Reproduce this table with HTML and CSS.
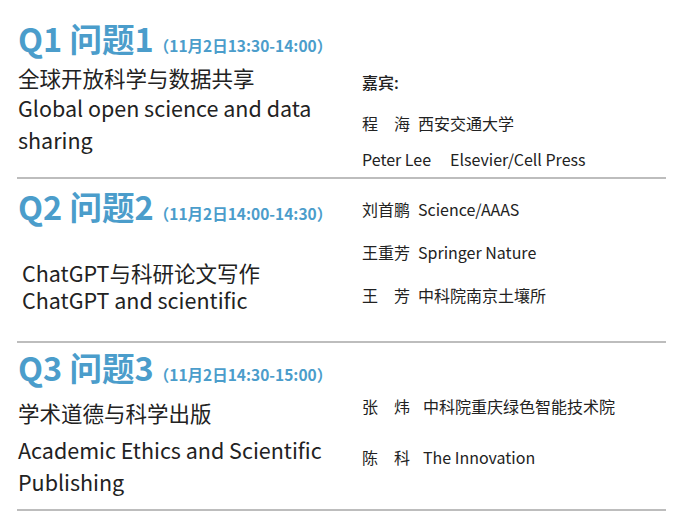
FILE: index.html
```html
<!DOCTYPE html>
<html lang="zh-CN">
<head>
<meta charset="utf-8">
<title>Agenda</title>
<link rel="stylesheet" href="styles.css">
</head>
<body>
<main class="agenda">
  <section class="topic topic-1">
    <div class="topic-left">
      <h2 class="q"><span class="q-main">Q1 问题1</span><span class="q-time">（11月2日13:30-14:00）</span></h2>
      <p class="zh zh-1">全球开放科学与数据共享</p>
      <p class="en en-1">Global open science and data sharing</p>
    </div>
    <ul class="guests guests-1">
      <li class="guest label">嘉宾:</li>
      <li class="guest"><span class="name">程　海</span><span class="org">西安交通大学</span></li>
      <li class="guest"><span class="name name-wide">Peter Lee</span><span class="org">Elsevier/Cell Press</span></li>
    </ul>
  </section>
  <section class="topic topic-2">
    <div class="topic-left">
      <h2 class="q"><span class="q-main">Q2 问题2</span><span class="q-time">（11月2日14:00-14:30）</span></h2>
      <p class="mix mix-2">ChatGPT与科研论文写作<br>ChatGPT and scientific</p>
    </div>
    <ul class="guests guests-2">
      <li class="guest"><span class="name">刘首鹏</span><span class="org">Science/AAAS</span></li>
      <li class="guest"><span class="name">王重芳</span><span class="org">Springer Nature</span></li>
      <li class="guest"><span class="name">王　芳</span><span class="org">中科院南京土壤所</span></li>
    </ul>
  </section>
  <section class="topic topic-3">
    <div class="topic-left">
      <h2 class="q"><span class="q-main">Q3 问题3</span><span class="q-time">（11月2日14:30-15:00）</span></h2>
      <p class="zh zh-3">学术道德与科学出版</p>
      <p class="en en-3">Academic Ethics and Scientific Publishing</p>
    </div>
    <ul class="guests guests-3">
      <li class="guest"><span class="name name-3">张　炜</span><span class="org">中科院重庆绿色智能技术院</span></li>
      <li class="guest"><span class="name name-3">陈　科</span><span class="org">The Innovation</span></li>
    </ul>
  </section>
</main>
</body>
</html>
```
FILE: styles.css
```css
* { box-sizing: border-box; }
html, body {
  margin: 0;
  padding: 0;
  background: #ffffff;
}
body {
  font-family: "Noto Sans CJK SC", "Noto Sans", sans-serif;
  color: #222222;
}
.agenda {
  width: 649px;
  margin-left: 17px;
}
.topic {
  display: grid;
  grid-template-columns: 345px 1fr;
  border-bottom: 2px solid #bdbdbd;
}
.topic-1 { height: 179px; padding-top: 18px; }
.topic-2 { height: 164px; padding-top: 7px; }
.topic-3 { height: 168px; padding-top: 4px; }

.topic-left { padding-left: 1px; }

.q {
  margin: 0;
  font-size: 32.5px;
  line-height: 40px;
  font-weight: 700;
  color: #4b9dcb;
  white-space: nowrap;
}
.q-time {
  font-size: 15.5px;
  font-weight: 700;
}

.zh, .en, .mix {
  margin: 0;
  font-size: 21.5px;
  font-weight: 400;
}
.zh { line-height: 28px; }
.en { line-height: 32px; }
.zh-1 { margin-top: -1px; }
.en-1 { margin-top: 0; width: 320px; }
.mix { line-height: 27px; }
.mix-2 { margin-top: 26px; padding-left: 4px; }
.zh-3 { margin-top: 5px; }
.en-3 { margin-top: 7px; width: 325px; }

.guests {
  list-style: none;
  margin: 0;
  padding: 0;
  display: flex;
  flex-direction: column;
  font-size: 16px;
  line-height: 20px;
}
.guest { display: flex; white-space: nowrap; }
.name { width: 48px; margin-right: 8px; }
.name-wide { width: auto; margin-right: 19px; }
.name-3 { margin-right: 13px; }
.label { font-weight: 500; }

.guests-1 { padding-top: 54px; gap: 16px; }
.guests-1 .label { margin-bottom: 5px; }
.guests-2 { padding-top: 13px; gap: 23px; }
.guests-3 { padding-top: 49px; gap: 31px; }
```
